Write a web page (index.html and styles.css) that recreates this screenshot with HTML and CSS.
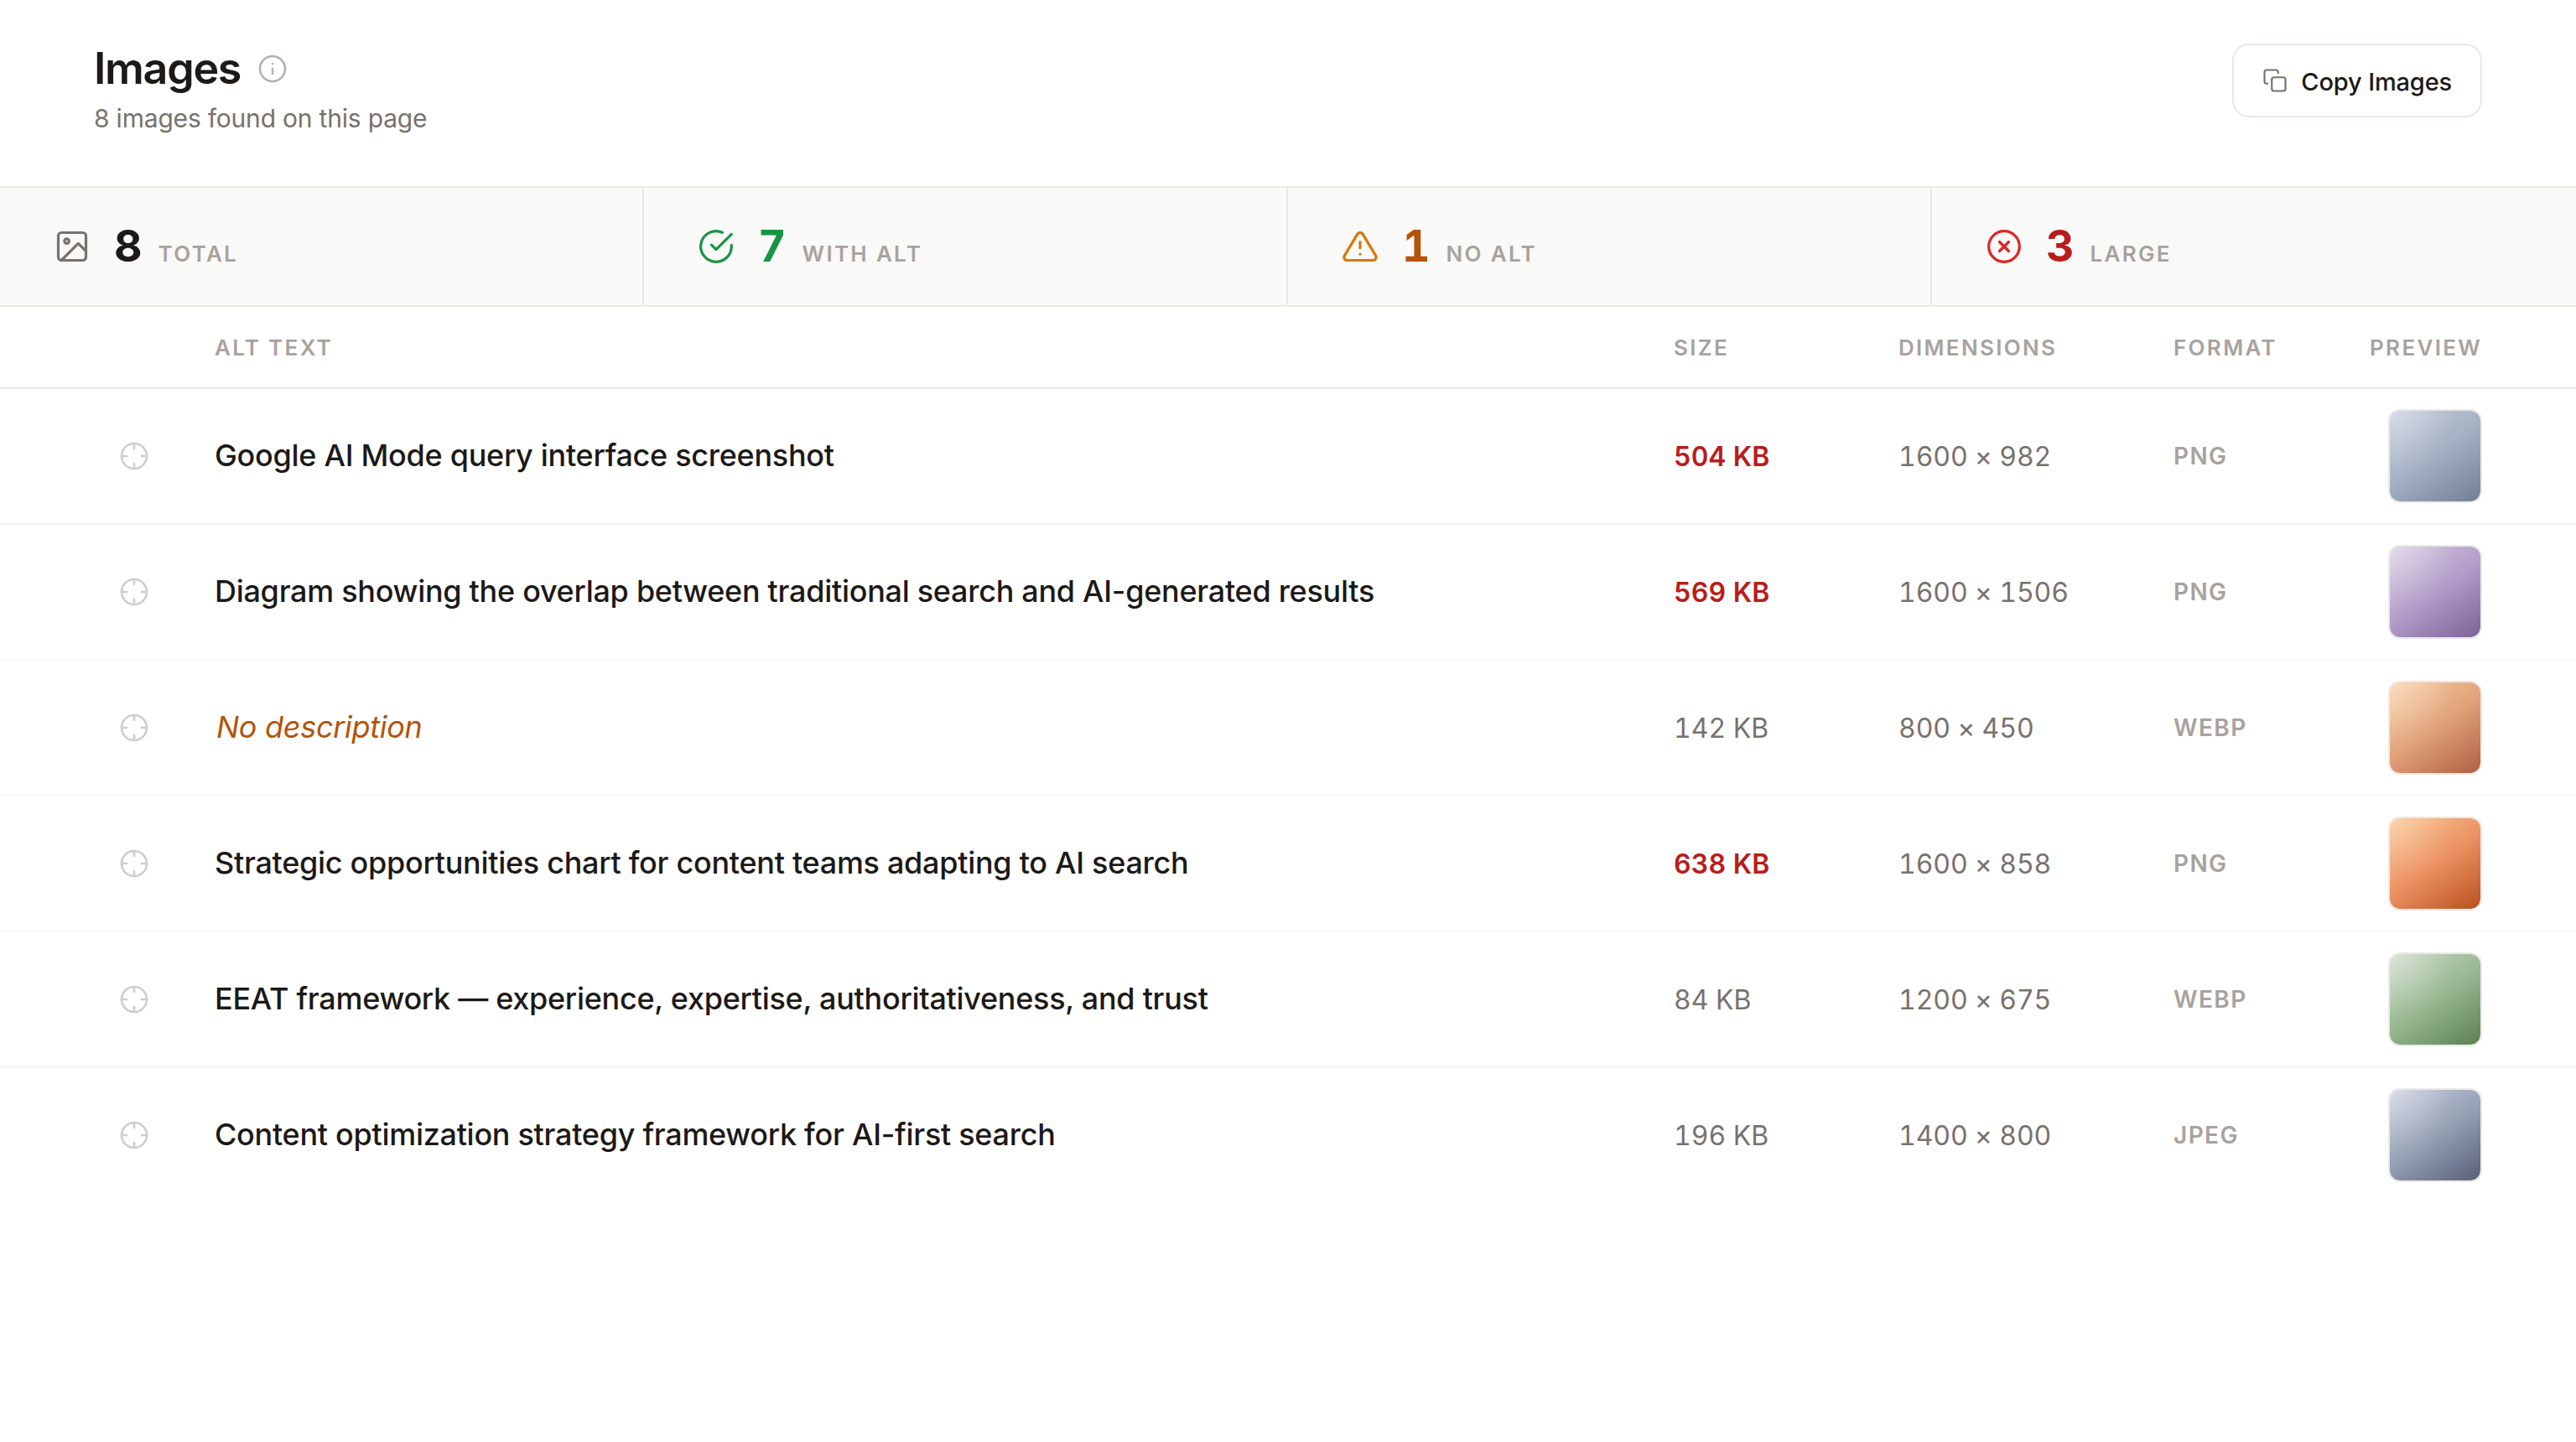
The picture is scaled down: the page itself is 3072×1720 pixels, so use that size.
FILE: index.html
```html
<!DOCTYPE html>
<html lang="en">
<head>
<meta charset="utf-8">
<title>Images</title>
<link rel="stylesheet" href="styles.css">
</head>
<body>

<!-- shared icon shapes -->
<svg class="defs" width="0" height="0">
	<symbol id="target" viewBox="0 0 24 24"><circle cx="12" cy="12" r="10"/><path d="M22 12h-4M6 12H2M12 6V2M12 22v-4"/></symbol>
</svg>

<header class="header">
	<div>
		<div class="title-row">
			<h1>Images</h1>
			<svg class="icon info" viewBox="0 0 24 24"><circle cx="12" cy="12" r="10"/><path d="M12 16v-4M12 8h.01"/></svg>
		</div>
		<p class="subtitle">8 images found on this page</p>
	</div>
	<button class="copy">
		<svg class="icon" viewBox="0 0 24 24"><rect x="9" y="9" width="13" height="13" rx="2"/><path d="M5 15H4a2 2 0 0 1-2-2V4a2 2 0 0 1 2-2h9a2 2 0 0 1 2 2v1"/></svg>
		<span>Copy Images</span>
	</button>
</header>

<section class="stats">
	<div class="stat total">
		<svg class="icon" viewBox="0 0 24 24"><rect x="3" y="3" width="18" height="18" rx="2"/><circle cx="8.5" cy="8.5" r="1.5"/><path d="M21 15l-5-5L5 21"/></svg>
		<div class="count"><b>8</b><span>Total</span></div>
	</div>
	<div class="stat good">
		<svg class="icon" viewBox="0 0 24 24"><path d="M22 11.08V12a10 10 0 1 1-5.93-9.14"/><path d="M22 4L12 14.01l-3-3"/></svg>
		<div class="count"><b>7</b><span>With alt</span></div>
	</div>
	<div class="stat warn">
		<svg class="icon" viewBox="0 0 24 24"><path d="M10.29 3.86L1.82 18a2 2 0 0 0 1.71 3h16.94a2 2 0 0 0 1.71-3L13.71 3.86a2 2 0 0 0-3.42 0z"/><path d="M12 9v4M12 17h.01"/></svg>
		<div class="count"><b>1</b><span>No alt</span></div>
	</div>
	<div class="stat bad">
		<svg class="icon" viewBox="0 0 24 24"><circle cx="12" cy="12" r="10"/><path d="M15 9l-6 6M9 9l6 6"/></svg>
		<div class="count"><b>3</b><span>Large</span></div>
	</div>
</section>

<main class="list">
	<div class="row head">
		<span></span><span>Alt text</span><span>Size</span><span>Dimensions</span><span>Format</span><span class="right">Preview</span>
	</div>
	<div class="row">
		<svg class="icon target"><use href="#target"/></svg>
		<span class="alt">Google AI Mode query interface screenshot</span>
		<span class="size large">504 KB</span>
		<span class="dims">1600 × 982</span>
		<span class="format">PNG</span>
		<span class="thumb slate"></span>
	</div>
	<div class="row">
		<svg class="icon target"><use href="#target"/></svg>
		<span class="alt">Diagram showing the overlap between traditional search and AI-generated results</span>
		<span class="size large">569 KB</span>
		<span class="dims">1600 × 1506</span>
		<span class="format">PNG</span>
		<span class="thumb purple"></span>
	</div>
	<div class="row">
		<svg class="icon target"><use href="#target"/></svg>
		<span class="alt missing">No description</span>
		<span class="size">142 KB</span>
		<span class="dims">800 × 450</span>
		<span class="format">WEBP</span>
		<span class="thumb sand"></span>
	</div>
	<div class="row">
		<svg class="icon target"><use href="#target"/></svg>
		<span class="alt">Strategic opportunities chart for content teams adapting to AI search</span>
		<span class="size large">638 KB</span>
		<span class="dims">1600 × 858</span>
		<span class="format">PNG</span>
		<span class="thumb orange"></span>
	</div>
	<div class="row">
		<svg class="icon target"><use href="#target"/></svg>
		<span class="alt">EEAT framework — experience, expertise, authoritativeness, and trust</span>
		<span class="size">84 KB</span>
		<span class="dims">1200 × 675</span>
		<span class="format">WEBP</span>
		<span class="thumb green"></span>
	</div>
	<div class="row">
		<svg class="icon target"><use href="#target"/></svg>
		<span class="alt">Content optimization strategy framework for AI-first search</span>
		<span class="size">196 KB</span>
		<span class="dims">1400 × 800</span>
		<span class="format">JPEG</span>
		<span class="thumb navy"></span>
	</div>
</main>

</body>
</html>
```
FILE: styles.css
```css
* {box-sizing: border-box}
body {margin: 0; background: #fff; color: #1c1917; font-family: Inter, "Liberation Sans", sans-serif}
h1, p {margin: 0}

.defs {display: block; position: absolute}
.icon {display: block; flex: none; fill: none; stroke: currentColor; stroke-width: 1.75; stroke-linecap: round; stroke-linejoin: round}

/* header */
.header {display: flex; justify-content: space-between; align-items: flex-start; height: 222px; padding: 52px 112px 0}
.title-row {display: flex; align-items: center; gap: 20px; height: 60px}
h1 {font-size: 52px; line-height: 60px; font-weight: 600; letter-spacing: -1.3px}
.info {width: 36px; height: 36px; color: #b5b0ad}
.subtitle {margin-top: 8px; font-size: 30px; line-height: 42px; letter-spacing: -0.2px; color: #78716c}
.copy {display: flex; align-items: center; gap: 16px; height: 88px; padding: 0 34px; border: 2px solid #ece8e6; border-radius: 20px; background: #fff; color: #1c1917; font-family: inherit; font-size: 29px; font-weight: 500; letter-spacing: -0.15px}
.copy .icon {width: 30px; height: 30px; color: #78716c}
.copy span {padding-top: 2px}

/* summary */
.stats {display: grid; grid-template-columns: repeat(4, 1fr); height: 144px; border-top: 2px solid #ece8e6; border-bottom: 2px solid #ece8e6; background: #f9f9f7}
.stat {display: flex; align-items: center; gap: 28px; padding-left: 64px; border-right: 2px solid #ece8e6}
.stat:last-child {border-right: 0}
.stat .icon {width: 44px; height: 44px}
.count {display: flex; align-items: baseline; gap: 20px}
.count b {font-size: 52px; line-height: 52px; font-weight: 700; letter-spacing: -1.04px; font-variant-numeric: tabular-nums}
.count span {font-size: 26px; font-weight: 600; letter-spacing: 2.3px; text-transform: uppercase; color: #a8a29e}
.total .icon {color: #78716c}
.good {color: #189446}
.warn {color: #d97706}
.warn b {color: #b45309}
.bad {color: #dc2626}
.bad b {color: #b91c1c}

/* image list */
.row {display: grid; grid-template-columns: 96px 1fr 220px 280px 184px 136px; column-gap: 48px; align-items: center; height: 162px; padding: 0 112px; border-bottom: 2px solid #f5f5f4}
.row:last-child {border-bottom-color: transparent}
.head {height: 98px; border-bottom-color: #ece8e6; font-size: 26px; font-weight: 600; letter-spacing: 2.3px; text-transform: uppercase; color: #a8a29e}
.right {justify-self: end; white-space: nowrap}
.target {width: 36px; height: 36px; justify-self: center; color: #d0cdca}
.alt {padding-bottom: 2px; font-size: 36px; font-weight: 500; letter-spacing: -0.29px; white-space: nowrap}
.missing {padding-left: 2px; font-weight: 400; font-style: italic; color: #b45309}
.size, .dims {font-size: 32px; color: #78716c; font-variant-numeric: tabular-nums; white-space: nowrap}
.size.large {font-weight: 600; color: #b91c1c}
.dims {letter-spacing: -0.1px}
.format {font-size: 28px; font-weight: 600; letter-spacing: 1.4px; color: #a8a29e}

.thumb {width: 112px; height: 112px; justify-self: end; border: 2px solid #ece8e6; border-radius: 14px}
.slate {background: radial-gradient(circle at 0 0, rgba(255,255,255,.3), transparent 50%) padding-box, linear-gradient(145deg, #c8cddd, #a3b0c3 50%, #727d92) padding-box}
.purple {background: radial-gradient(circle at 0 0, rgba(255,255,255,.35), transparent 50%) padding-box, linear-gradient(145deg, #d4c8de, #b39dc9 50%, #7b6298) padding-box}
.sand {background: radial-gradient(circle at 0 0, rgba(255,255,255,.35), transparent 50%) padding-box, linear-gradient(145deg, #f9cca0, #e0a279 50%, #b05f42) padding-box}
.orange {background: radial-gradient(circle at 0 0, rgba(255,255,255,.25), transparent 50%) padding-box, linear-gradient(145deg, #fac693, #ec9264 50%, #b9501c) padding-box}
.green {background: radial-gradient(circle at 0 0, rgba(255,255,255,.35), transparent 50%) padding-box, linear-gradient(145deg, #c8d6c4, #98b891 50%, #5a8050) padding-box}
.navy {background: radial-gradient(circle at 0 0, rgba(255,255,255,.3), transparent 50%) padding-box, linear-gradient(145deg, #cacddf, #95a1b4 50%, #585f78) padding-box}
```
